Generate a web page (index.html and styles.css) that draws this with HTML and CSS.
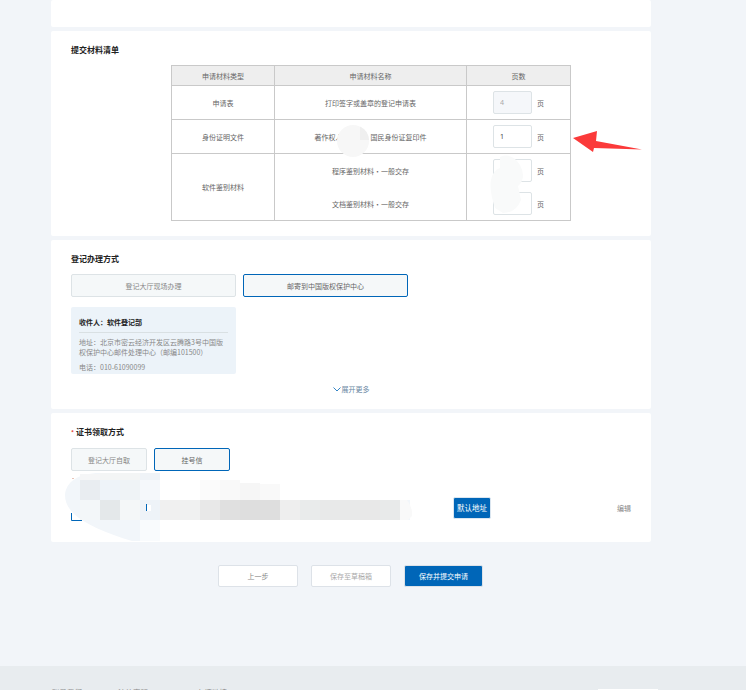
FILE: index.html
```html
<!DOCTYPE html>
<html lang="zh-CN">
<head>
<meta charset="utf-8">
<title>提交材料清单</title>
<link rel="stylesheet" href="styles.css">
</head>
<body>
<div class="page">
  <main class="wrap">
    <section class="card card-top"></section>

    <section class="card">
      <h2 class="title">提交材料清单</h2>
      <table class="materials">
        <colgroup><col class="col-a"><col class="col-b"><col class="col-c"></colgroup>
        <thead>
          <tr><th>申请材料类型</th><th>申请材料名称</th><th>页数</th></tr>
        </thead>
        <tbody>
          <tr class="row">
            <td>申请表</td>
            <td>打印签字或盖章的登记申请表</td>
            <td><div class="pages"><input class="num num-off" value="4" disabled><span>页</span></div></td>
          </tr>
          <tr class="row">
            <td>身份证明文件</td>
            <td>著作权人（中国）国民身份证复印件</td>
            <td><div class="pages"><input class="num" value="1"><span>页</span></div></td>
          </tr>
          <tr class="row">
            <td rowspan="2">软件鉴别材料</td>
            <td class="merge-top">程序鉴别材料·一般交存</td>
            <td class="merge-top"><div class="pages"><input class="num" value=""><span>页</span></div></td>
          </tr>
          <tr class="row row-last">
            <td class="merge-bottom">文档鉴别材料·一般交存</td>
            <td class="merge-bottom"><div class="pages"><input class="num" value=""><span>页</span></div></td>
          </tr>
        </tbody>
      </table>
    </section>

    <section class="card">
      <h2 class="title">登记办理方式</h2>
      <div class="choices">
        <button class="choice choice-wide">登记大厅现场办理</button>
        <button class="choice choice-wide is-on">邮寄到中国版权保护中心</button>
      </div>
      <div class="info">
        <div class="info-name">收件人：软件登记部</div>
        <p class="info-line">地址：北京市密云经济开发区云腾路3号中国版权保护中心邮件处理中心（邮编101500）</p>
        <p class="info-line info-phone">电话：010-61090099</p>
      </div>
      <div class="more">
        <svg class="chev" viewBox="0 0 8 5" width="8" height="5"><path d="M.5.5 4 4 7.500.5" fill="none" stroke="#0066b8" stroke-width=".8"/></svg>
        <span>展开更多</span>
      </div>
    </section>

    <section class="card">
      <h2 class="title"><span class="req">*</span>证书领取方式</h2>
      <div class="choices">
        <button class="choice choice-small">登记大厅自取</button>
        <button class="choice choice-small is-on">挂号信</button>
      </div>
      <div class="addr">
        <span class="tag">默认地址</span>
        <a class="edit">编辑</a>
      </div>
    </section>

    <div class="actions">
      <button class="act">上一步</button>
      <button class="act act-muted">保存至草稿箱</button>
      <button class="act act-primary">保存并提交申请</button>
    </div>
  </main>

  <footer class="foot">
    <span class="foot-link">联系我们</span>
    <span class="foot-link">法律声明</span>
    <span class="foot-link">友情链接</span>
    <span class="foot-box"></span>
  </footer>

  <svg class="overlay" viewBox="0 0 746 690" width="746" height="690" aria-hidden="true">
    <circle cx="353" cy="141" r="16" fill="#f7f7f7"/>
    <path d="M360 126.600A16 16 0 0 1 369 140H360Z" fill="#efefef"/>
    <path d="M500 157Q512 152 520 165 527 178 518 186L521 200Q516 213 503 213L495 208Q489 190 491 180 493 170 500 168Z" fill="#f9fafa"/>
    <polygon points="573,138 597,131 596,141 642,149.500 594,148 593,152" fill="#fb3a3a"/>

    <path d="M65 495C66 482 78 473 100 473H160C210 474 250 478 280 483V500H410V520H160V541H132C105 533 85 524 74 514 68 508 65 502 65 495Z" fill="#f2f6fa"/>
    <rect x="160" y="473" width="120" height="47" fill="#fff"/>
    <rect x="80" y="474" width="20" height="6" fill="#f5f6f7"/>
    <rect x="100" y="473" width="40" height="7" fill="#f3f5f5"/>
    <rect x="140" y="473" width="20" height="7" fill="#eff3f7"/>
    <rect x="80" y="480" width="20" height="20" fill="#e9edf1"/>
    <rect x="100" y="480" width="20" height="20" fill="#eef3f9"/>
    <rect x="120" y="480" width="20" height="20" fill="#eff3f6"/>
    <rect x="140" y="480" width="20" height="20" fill="#f5f8fb"/>
    <rect x="200" y="480" width="20" height="20" fill="#fbfbfb"/>
    <rect x="220" y="480" width="20" height="20" fill="#f9f9f9"/>
    <rect x="240" y="483" width="20" height="17" fill="#f6f6f6"/>
    <rect x="260" y="484" width="20" height="16" fill="#f9f9f9"/>
    <rect x="80" y="500" width="20" height="20" fill="#f3f7f9"/>
    <rect x="100" y="500" width="20" height="20" fill="#e4e8ea"/>
    <rect x="120" y="500" width="20" height="20" fill="#f4f7f8"/>
    <rect x="140" y="500" width="20" height="20" fill="#eef3f8"/>
    <rect x="147" y="505" width="4" height="6" fill="#fff"/>
    <rect x="160" y="500" width="20" height="20" fill="#f0f0f0"/>
    <rect x="180" y="500" width="20" height="20" fill="#f0f1f1"/>
    <rect x="200" y="500" width="20" height="20" fill="#e8e8e8"/>
    <rect x="220" y="500" width="20" height="20" fill="#e0e0e0"/>
    <rect x="240" y="500" width="40" height="20" fill="#dedede"/>
    <rect x="280" y="500" width="20" height="20" fill="#eeeeee"/>
    <rect x="300" y="500" width="20" height="20" fill="#e9ebeb"/>
    <rect x="320" y="500" width="40" height="20" fill="#e8e9e9"/>
    <rect x="360" y="500" width="20" height="20" fill="#e8e8e8"/>
    <rect x="380" y="500" width="20" height="20" fill="#e8eaea"/>
    <path d="M400 500H407Q413 508 412 516L408 520H400Z" fill="#f9f9f9"/>
    <rect x="140" y="520" width="20" height="21" fill="#f9fbfd"/>
    <rect x="146" y="504" width="1" height="7" fill="#0066b8"/>
    <path d="M71.500 513V520.500H82" fill="none" stroke="#0066b8"/>
    <path d="M72 478.500H74" stroke="#e8c4b8"/>
  </svg>
</div>
</body>
</html>
```

FILE: styles.css
```css
* { box-sizing: border-box; }

html, body {
  margin: 0;
  padding: 0;
}

body {
  background: #f2f5f9;
  font-family: "Noto Sans CJK SC", "Noto Sans", sans-serif;
  font-size: 7px;
  color: #666;
}

.page {
  position: relative;
  width: 746px;
  height: 690px;
  overflow: hidden;
}

.wrap {
  width: 600px;
  margin-left: 51px;
  display: flex;
  flex-direction: column;
  gap: 4px;
}

.card {
  background: #fff;
  border-radius: 2px;
  padding: 13px 20px 0;
}

.card-top { height: 27px; }

.title {
  margin: 0 0 9px;
  font-size: 8px;
  line-height: 12px;
  font-weight: 700;
  color: #222;
}

.req {
  display: inline-block;
  width: 5px;
  color: #e5413a;
  font-size: 6px;
}

/* materials table */
.materials {
  width: 399px;
  margin: 0 0 15px 100px;
  border-collapse: collapse;
  table-layout: fixed;
  color: #666;
}

.col-a { width: 103px; }
.col-b { width: 192px; }
.col-c { width: 104px; }

.materials th,
.materials td {
  border: 1px solid #c9c9c9;
  padding: 0;
  text-align: center;
  font-weight: 400;
  line-height: 12px;
}

.materials th {
  height: 20px;
  background: #eeeeee;
}

.row { height: 34px; }
.row-last { height: 33px; }

.materials .merge-top { border-bottom: 0; }
.materials .merge-bottom { border-top: 0; }

.pages {
  display: flex;
  align-items: center;
  justify-content: center;
  gap: 5px;
}

.num {
  width: 39px;
  height: 23px;
  padding: 0 0 0 6px;
  border: 1px solid #dde3e6;
  border-radius: 2px;
  background: #fff;
  color: #444;
  font: 7px "Noto Sans", sans-serif;
  outline: none;
}

.num-off {
  background: #f5f7fa;
  color: #aaa;
}

/* choice buttons */
.choices {
  display: flex;
  gap: 7px;
}

.choice {
  height: 23px;
  padding: 0;
  background: #f5f8f9;
  border: 1px solid #dde3e6;
  border-radius: 2px;
  color: #888;
  font: inherit;
}

.choice-wide { width: 165px; }
.choice-small { width: 76px; }

.choice.is-on {
  border-color: #0066b8;
  color: #666;
}

/* recipient box */
.info {
  width: 165px;
  height: 67px;
  margin-top: 10px;
  padding: 9px 8px 0;
  overflow: hidden;
  background: #ecf3f9;
  border-radius: 2px;
  color: #888;
  line-height: 10px;
}

.info-name {
  padding-bottom: 4px;
  border-bottom: 1px solid #d9e0e3;
  margin-bottom: 4px;
  color: #222;
  font-weight: 700;
  line-height: 12px;
}

.info-line {
  margin: 0;
}

.info-phone { margin-top: 5px; }

.more {
  display: flex;
  align-items: center;
  justify-content: center;
  gap: 1px;
  height: 12px;
  margin-top: 9px;
  padding: 0 0 14px;
  box-sizing: content-box;
  color: #6a87a3;
  line-height: 12px;
}

/* address row */
.addr {
  display: flex;
  align-items: center;
  justify-content: flex-end;
  margin-top: 26px;
  padding-bottom: 23px;
}

.tag {
  width: 38px;
  height: 22px;
  margin-right: 126px;
  background: #0066b8;
  border: 1px solid #dbe6f0;
  border-radius: 2px;
  color: #fff;
  font-size: 7.500px;
  line-height: 20px;
  text-align: center;
}

.edit {
  color: #888;
  white-space: nowrap;
}

/* bottom actions */
.actions {
  display: flex;
  gap: 13px;
  margin-top: 19px;
  padding-left: 167px;
}

.act {
  width: 80px;
  height: 22px;
  padding: 0;
  background: #fff;
  border: 1px solid #dde2e8;
  border-radius: 2px;
  color: #888;
  font: inherit;
}

.act-muted { color: #aaa; }

.act-primary {
  width: 79px;
  background: #0066b8;
  color: #fff;
}

/* footer */
.foot {
  display: flex;
  position: absolute;
  left: 0;
  right: 0;
  top: 666px;
  height: 24px;
  padding: 21px 0 0 52px;
  background: #e8ecef;
  color: #888;
  font-size: 7.500px;
  line-height: 12px;
}

.foot-link { width: 30px; margin-right: 36px; }
.foot-link:nth-child(2) { margin-right: 49px; }

.foot-box {
  position: absolute;
  left: 598px;
  top: 23px;
  width: 60px;
  height: 20px;
  background: #fff;
}

.overlay {
  position: absolute;
  left: 0;
  top: 0;
  pointer-events: none;
}
```
